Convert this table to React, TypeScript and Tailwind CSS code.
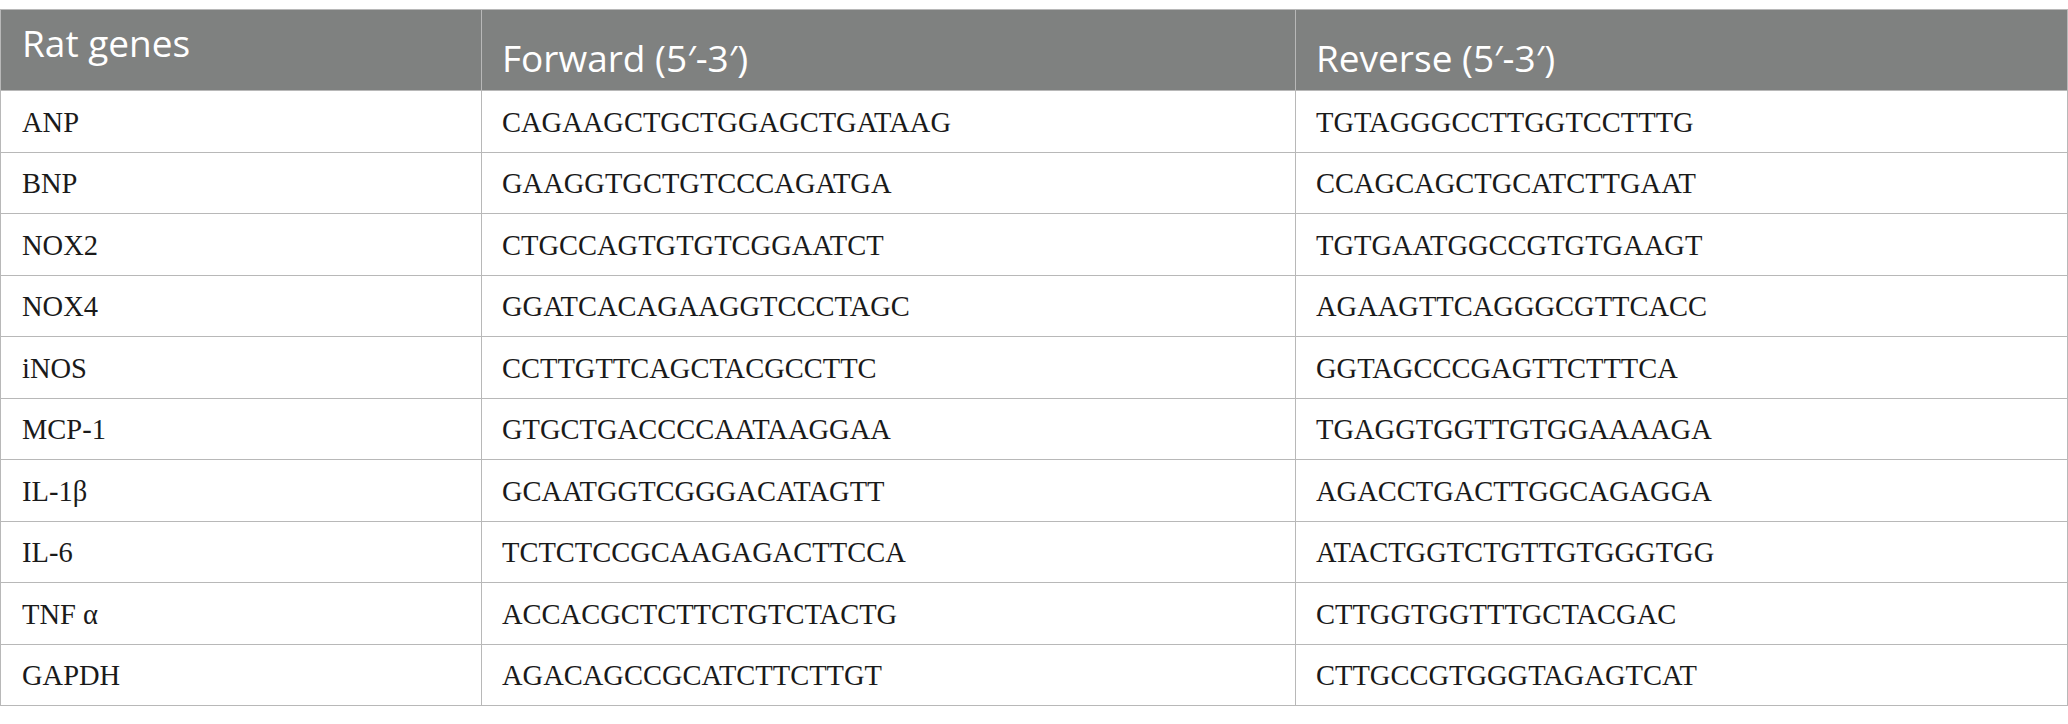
import React from "react";

const rows: [string, string, string][] = [
  ["ANP", "CAGAAGCTGCTGGAGCTGATAAG", "TGTAGGGCCTTGGTCCTTTG"],
  ["BNP", "GAAGGTGCTGTCCCAGATGA", "CCAGCAGCTGCATCTTGAAT"],
  ["NOX2", "CTGCCAGTGTGTCGGAATCT", "TGTGAATGGCCGTGTGAAGT"],
  ["NOX4", "GGATCACAGAAGGTCCCTAGC", "AGAAGTTCAGGGCGTTCACC"],
  ["iNOS", "CCTTGTTCAGCTACGCCTTC", "GGTAGCCCGAGTTCTTTCA"],
  ["MCP-1", "GTGCTGACCCCAATAAGGAA", "TGAGGTGGTTGTGGAAAAGA"],
  ["IL-1β", "GCAATGGTCGGGACATAGTT", "AGACCTGACTTGGCAGAGGA"],
  ["IL-6", "TCTCTCCGCAAGAGACTTCCA", "ATACTGGTCTGTTGTGGGTGG"],
  ["TNF α", "ACCACGCTCTTCTGTCTACTG", "CTTGGTGGTTTGCTACGAC"],
  ["GAPDH", "AGACAGCCGCATCTTCTTGT", "CTTGCCGTGGGTAGAGTCAT"],
];

export default function App() {
  return (
    <div className="w-[2068px] bg-white pt-[9px]">
      <table className="w-[2068px] table-fixed border-collapse border border-[#b8b8b8]">
        <colgroup>
          <col className="w-[481px]" />
          <col className="w-[814px]" />
          <col />
        </colgroup>
        <thead>
          <tr className="h-[81px] bg-[#7f8180] text-white font-['Open_Sans',sans-serif] text-[37px] font-normal">
            <th className="border border-[#b8b8b8] px-[21px] pt-[11px] text-left align-top font-normal leading-[44px]">
              Rat genes
            </th>
            <th className="border border-[#b8b8b8] px-[20px] pt-[26px] text-left align-top font-normal leading-[44px]">
              Forward (5′-3′)
            </th>
            <th className="border border-[#b8b8b8] px-[20px] pt-[26px] text-left align-top font-normal leading-[44px]">
              Reverse (5′-3′)
            </th>
          </tr>
        </thead>
        <tbody className="font-['Liberation_Serif',serif] text-[28.5px] text-[#1a1a1a]">
          {rows.map((r) => (
            <tr key={r[0]} className="h-[61.5px]">
              <td className="border border-[#b8b8b8] px-[21px] pt-[3px] align-middle leading-[32px]">{r[0]}</td>
              <td className="border border-[#b8b8b8] px-[20px] pt-[3px] align-middle leading-[32px]">{r[1]}</td>
              <td className="border border-[#b8b8b8] px-[20px] pt-[3px] align-middle leading-[32px]">{r[2]}</td>
            </tr>
          ))}
        </tbody>
      </table>
    </div>
  );
}
